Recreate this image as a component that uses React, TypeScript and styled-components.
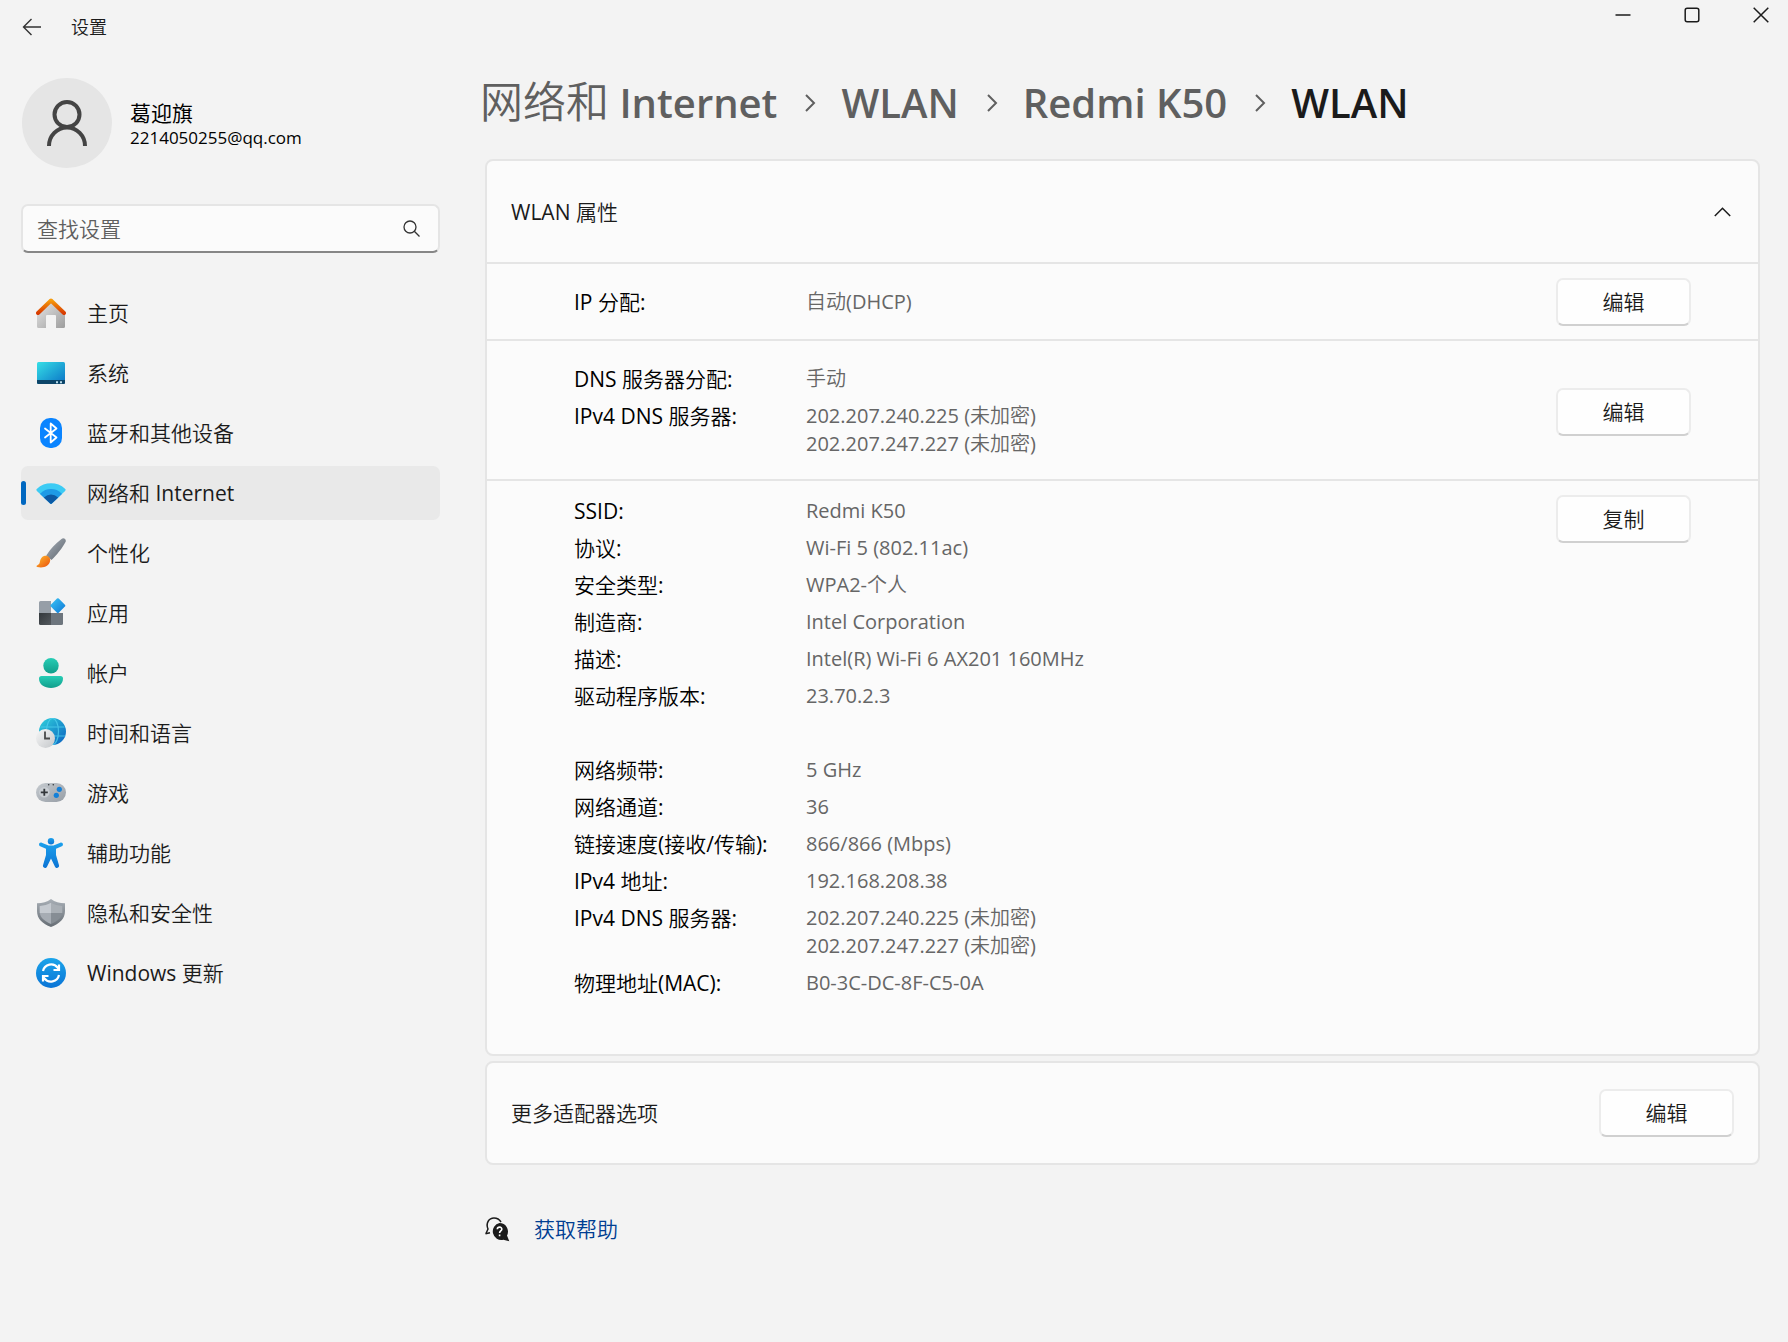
import React, { useState } from "react";
import styled, { createGlobalStyle, css } from "styled-components";

const GlobalStyle = createGlobalStyle`
  *, *::before, *::after { box-sizing: border-box; }
  body {
    margin: 0;
    background: #f3f3f3;
    color: #1b1b1b;
    font-family: "Open Sans", "Noto Sans CJK SC DemiLight", "Noto Sans CJK SC Light", "Noto Sans CJK SC", sans-serif;
    font-size: 21px;
    line-height: 28px;
  }
  button, input { font: inherit; color: inherit; }
`;

const Page = styled.div`
  display: flex;
  flex-direction: column;
  min-height: 100vh;
`;

const TitleBar = styled.header`
  display: flex;
  justify-content: space-between;
  align-items: flex-start;
  height: 56px;
  padding: 0 13px 0 18px;
`;

const TitleGroup = styled.div`
  display: flex;
  align-items: center;
  gap: 25px;
  height: 54px;
  font-size: 18px;
`;

const WindowControls = styled.div`
  display: flex;
  gap: 41px;
  padding-top: 1px;
`;

const IconButton = styled.button`
  display: flex;
  align-items: center;
  justify-content: center;
  width: 28px;
  height: 28px;
  padding: 0;
  border: 0;
  background: none;
`;

const Layout = styled.div`
  display: flex;
  flex: 1;
  gap: 45px;
  padding: 0 28px 0 21px;
`;

const Sidebar = styled.aside`
  flex: 0 0 419px;
  padding-top: 22px;
`;

const Profile = styled.div`
  display: flex;
  align-items: center;
  gap: 18px;
  margin-left: 1px;
`;

const Avatar = styled.div`
  display: flex;
  align-items: center;
  justify-content: center;
  width: 90px;
  height: 90px;
  border-radius: 50%;
  background: #e5e5e5;
`;

const ProfileText = styled.div`
  padding-top: 3px;
`;

const ProfileName = styled.div`
  color: #000;
  font-family: "Open Sans", "Noto Sans CJK SC", sans-serif;
  line-height: 26px;
`;

const ProfileMail = styled.div`
  color: #000;
  font-size: 17px;
  line-height: 24px;
`;

const SearchBox = styled.div`
  display: flex;
  align-items: center;
  height: 49px;
  margin: 36px 0 33px;
  padding: 0 18px 0 14px;
  border: 2px solid #e5e5e5;
  border-bottom-color: #868686;
  border-radius: 7px;
  background: #fbfbfb;
`;

const SearchInput = styled.input`
  flex: 1;
  min-width: 0;
  padding: 0;
  border: 0;
  outline: 0;
  background: none;
  &::placeholder { color: #5f5f5f; opacity: 1; }
`;

const NavList = styled.ul`
  display: flex;
  flex-direction: column;
  gap: 6px;
  margin: 0;
  padding: 0;
  list-style: none;
`;

const NavLink = styled.a<{ $active: boolean }>`
  position: relative;
  display: flex;
  align-items: center;
  gap: 21px;
  height: 54px;
  padding-left: 15px;
  border-radius: 7px;
  color: #1b1b1b;
  text-decoration: none;
  ${(p) =>
    p.$active &&
    css`
      background: #e9e9e9;
      &::before {
        content: "";
        position: absolute;
        left: 0;
        top: 15px;
        width: 5px;
        height: 24px;
        border-radius: 3px;
        background: #0067c0;
      }
    `}
`;

const Main = styled.main`
  flex: 1;
  min-width: 0;
  padding-top: 16px;
`;

const Crumbs = styled.ol`
  display: flex;
  align-items: center;
  margin: 0 0 26px -5px;
  padding: 0;
  list-style: none;
  font-size: 40px;
  font-weight: 600;
  line-height: 60px;
  white-space: nowrap;
`;

const Crumb = styled.li`
  display: flex;
  align-items: center;
`;

const CrumbLink = styled.a<{ $current?: boolean }>`
  color: ${(p) => (p.$current ? "#1b1b1b" : "#5f5f5f")};
  text-decoration: none;
`;

const CrumbHan = styled.span`
  font-size: 43px;
  font-weight: 400;
`;

const CrumbArrow = styled.svg`
  margin: 0 25px 0 27px;
`;

const Card = styled.section`
  margin-bottom: 5px;
  border: 2px solid #e5e5e5;
  border-radius: 8px;
  background: #fbfbfb;
`;

const CardHeader = styled.button`
  display: flex;
  align-items: center;
  justify-content: space-between;
  width: 100%;
  height: 101px;
  padding: 0 27px 0 24px;
  border: 0;
  background: none;
  text-align: left;
`;

const CardRow = styled.div`
  display: flex;
  align-items: center;
  justify-content: space-between;
  height: 100px;
  padding: 0 24px;
`;

const Section = styled.div<{ $top: number; $bottom: number; $align?: string }>`
  display: flex;
  align-items: ${(p) => p.$align ?? "center"};
  justify-content: space-between;
  border-top: 2px solid #e5e5e5;
  padding: ${(p) => `${p.$top}px 67px ${p.$bottom}px 87px`};
`;

const Details = styled.dl`
  display: grid;
  grid-template-columns: 232px 1fr;
  row-gap: 9px;
  margin: 0;
  padding: 2px 0;
`;

const Term = styled.dt`
  color: #000;
  white-space: nowrap;
`;

const Value = styled.dd`
  margin: 0;
  color: #666;
  font-size: 20px;
  white-space: pre-line;
`;

const Spacer = styled.div`
  grid-column: 1 / -1;
  height: 28px;
`;

const ActionButton = styled.button`
  width: 135px;
  height: 48px;
  padding: 0;
  border: 2px solid #ececec;
  border-bottom-color: #d0d0d0;
  border-radius: 7px;
  background: #fefefe;
`;

const Help = styled.div`
  display: flex;
  align-items: center;
  gap: 24px;
  padding: 45px 0 40px;
`;

const HelpLink = styled.a`
  color: #003e92;
  text-decoration: none;
`;

const NavSvg = styled.svg.attrs({ viewBox: "0 0 30 30", width: 30, height: 30, "aria-hidden": true })`
  flex: none;
  display: block;
`;

type Stops = [string, string];
const Gradient = ({ id, stops, vertical }: { id: string; stops: Stops; vertical?: boolean }) => (
  <linearGradient id={id} x1="0" y1="0" x2={vertical ? "0" : "1"} y2="1">
    <stop offset="0" stopColor={stops[0]} />
    <stop offset="1" stopColor={stops[1]} />
  </linearGradient>
);

const HomeIcon = () => (
  <NavSvg>
    <defs>
      <Gradient id="homeWall" stops={["#e6e6e6", "#9d9d9d"]} />
      <Gradient id="homeRoof" stops={["#f59a0b", "#d83b01"]} vertical />
    </defs>
    <path d="M15 4 29 16v12.500a1.500 1.500 0 0 1-1.500 1.500H20V18a1 1 0 0 0-1-1h-8a1 1 0 0 0-1 1v12H2.500A1.500 1.500 0 0 1 1 28.500V16z" fill="url(#homeWall)" />
    <path d="M2 15 15 2.500 28 15" fill="none" stroke="url(#homeRoof)" strokeWidth="4" strokeLinecap="round" strokeLinejoin="round" />
  </NavSvg>
);

const SystemIcon = () => (
  <NavSvg>
    <defs><Gradient id="screen" stops={["#35dfe6", "#0a72c6"]} /></defs>
    <rect x="1" y="4" width="28" height="22" rx="1.500" fill="url(#screen)" />
    <path d="M1 22h28v2.500a1.500 1.500 0 0 1-1.500 1.500h-25A1.500 1.500 0 0 1 1 24.500z" fill="#0c4569" />
    <path d="M20 23.200h2v2h-2zM24 23.200h2v2h-2z" fill="#b9dcec" />
  </NavSvg>
);

const BluetoothIcon = () => (
  <NavSvg>
    <rect x="4" y="0" width="22" height="30" rx="10" fill="#0a84ff" />
    <path d="M9 10.500 20.500 19.500 14.700 24.500V5.500L20.500 10.500 9 19.500" fill="none" stroke="#fff" strokeWidth="1.800" strokeLinecap="round" strokeLinejoin="round" />
  </NavSvg>
);

const WifiIcon = () => (
  <NavSvg>
    <defs>
      <clipPath id="fan">
        <path d="M13.900 25.300.9 12.900a1.500 1.500 0 0 1 .1-2.200C8.500 3.500 21.500 3.500 29 10.700a1.500 1.500 0 0 1 .1 2.200l-13 12.400a1.600 1.600 0 0 1-2.200 0z" />
      </clipPath>
    </defs>
    <g clipPath="url(#fan)">
      <rect width="30" height="30" fill="#3ccbf4" />
      <circle cx="15" cy="26" r="15" fill="#1e9ae6" />
      <circle cx="15" cy="26" r="9.500" fill="#0c59a4" />
    </g>
  </NavSvg>
);

const BrushIcon = () => (
  <NavSvg>
    <defs>
      <Gradient id="handle" stops={["#a9b1ba", "#5b636c"]} />
      <Gradient id="bristle" stops={["#ffbd2e", "#ea4f0c"]} />
    </defs>
    <path d="M25.500.9c2.200-1.700 5.300.4 4 3.200C26.800 9.500 21 17 15.500 22l-5.300-4.400C14 11.500 20 5 25.500.9z" fill="url(#handle)" />
    <path d="M8.800 17.800c3.200-.6 6 2 5.300 5.200-.9 4.800-6.300 7.600-12.900 6-.9-.3-.9-1.300-.1-1.600 3.200-1.200 2.300-2.900 3.400-5.800.8-2.100 2.200-3.400 4.300-3.800z" fill="url(#bristle)" />
  </NavSvg>
);

const AppsIcon = () => (
  <NavSvg>
    <defs>
      <Gradient id="appDark" stops={["#33383c", "#54595e"]} />
      <Gradient id="appDiamond" stops={["#3ac4f5", "#0f78d6"]} />
    </defs>
    <path d="M4.500 3H15v12H3V4.500A1.500 1.500 0 0 1 4.500 3z" fill="#969ea7" />
    <path d="M3 15h12v12H4.500A1.500 1.500 0 0 1 3 25.500z" fill="url(#appDark)" />
    <path d="M15 15h12v10.500a1.500 1.500 0 0 1-1.500 1.500H15z" fill="#6d757d" />
    <path d="m21 .6-6.200 6.200a1.200 1.200 0 0 0 0 1.700l6.200 6.200a1.200 1.200 0 0 0 1.700 0l6.200-6.200a1.200 1.200 0 0 0 0-1.700L22.700.6a1.200 1.200 0 0 0-1.700 0z" fill="url(#appDiamond)" />
  </NavSvg>
);

const AccountIcon = () => (
  <NavSvg>
    <defs><Gradient id="person" stops={["#27cdb5", "#109e8b"]} vertical /></defs>
    <circle cx="15" cy="7.700" r="7.700" fill="url(#person)" />
    <path d="M5.500 18h19a2.500 2.500 0 0 1 2.500 2.500C27 26.500 21.500 30 15 30S3 26.500 3 20.500A2.500 2.500 0 0 1 5.500 18z" fill="url(#person)" />
  </NavSvg>
);

const TimeIcon = () => (
  <NavSvg>
    <defs>
      <Gradient id="globe" stops={["#2fd3dc", "#0b5fc0"]} />
      <Gradient id="clockFace" stops={["#f7f7f7", "#c4c7ca"]} />
    </defs>
    <circle cx="16.500" cy="13.500" r="13.500" fill="url(#globe)" />
    <g fill="none" stroke="#4fd0ee" strokeWidth="1.200" opacity=".8">
      <ellipse cx="16.500" cy="13.500" rx="6" ry="13" />
      <path d="M4.500 9h24M3.500 18h26" />
    </g>
    <circle cx="9.500" cy="20.500" r="9.500" fill="url(#clockFace)" />
    <path d="M9 13.500V20.500h5" fill="none" stroke="#4a4a4a" strokeWidth="1.800" />
  </NavSvg>
);

const GameIcon = () => (
  <NavSvg>
    <defs><Gradient id="pad" stops={["#c6cbd0", "#969da5"]} /></defs>
    <rect x="0" y="5" width="30" height="19" rx="9.500" fill="url(#pad)" />
    <circle cx="8.300" cy="14.300" r="5.300" fill="#c9ced3" />
    <path d="M8.300 10.800v7M4.800 14.300h7" stroke="#33373b" strokeWidth="1.800" />
    <circle cx="23.300" cy="11.300" r="2.600" fill="#1480d8" />
    <circle cx="20.300" cy="17.300" r="2.600" fill="#1480d8" />
    <circle cx="12.700" cy="6.700" r=".8" fill="#33373b" />
    <circle cx="17.300" cy="6.700" r=".8" fill="#33373b" />
  </NavSvg>
);

const AccessIcon = () => (
  <NavSvg>
    <defs><Gradient id="figure" stops={["#1ba0ec", "#0c74d4"]} vertical /></defs>
    <g fill="url(#figure)">
      <circle cx="15" cy="3.200" r="3.200" />
      <path d="M5.700 4.700 12.500 7.400h5l6.800-2.700c2.500-.8 3.700 2.500 1.500 3.500L20 10.800V17l3 10.200c.6 2.700-2.900 3.800-4 1.500L15 20.500l-4 8.200c-1.100 2.300-4.600 1.200-4-1.500L10 17v-6.200L4.200 8.200C2 7.200 3.200 3.900 5.700 4.700z" />
    </g>
  </NavSvg>
);

const ShieldIcon = () => (
  <NavSvg>
    <defs><Gradient id="shieldEdge" stops={["#a8afb6", "#666d74"]} vertical /></defs>
    <path d="M15 1c4 3.200 8.500 4.300 14 4.300V13c0 8-5.500 12.500-14 16C6.500 25.500 1 21 1 13V5.300C6.500 5.300 11 4.200 15 1z" fill="url(#shieldEdge)" />
    <path d="M15 4.800V15H3.700V8C8 7.700 11.500 6.800 15 4.800z" fill="#c5cad0" />
    <path d="M15 4.800V15h11.300V8C22 7.700 18.500 6.800 15 4.800z" fill="#a9afb5" />
    <path d="M3.800 15H15v11C8.500 23.200 4.600 20 3.800 15z" fill="#a6acb3" />
    <path d="M26.200 15H15v11c6.500-2.800 10.400-6 11.200-11z" fill="#868d94" />
  </NavSvg>
);

const UpdateIcon = () => (
  <NavSvg>
    <defs><Gradient id="update" stops={["#1ba4ea", "#0a74d6"]} vertical /></defs>
    <circle cx="15" cy="15" r="15" fill="url(#update)" />
    <g fill="none" stroke="#fff" strokeWidth="2.200">
      <path d="M7 13a8.300 8.300 0 0 1 14.800-3.200L23 11.500M23 6.500v5.500h-5.500" />
      <path d="M23 17a8.300 8.300 0 0 1-14.800 3.200L7 18.500M7 23.500V18h5.500" />
    </g>
  </NavSvg>
);

const NAV = [
  { label: "主页", Icon: HomeIcon },
  { label: "系统", Icon: SystemIcon },
  { label: "蓝牙和其他设备", Icon: BluetoothIcon },
  { label: "网络和 Internet", Icon: WifiIcon, active: true },
  { label: "个性化", Icon: BrushIcon },
  { label: "应用", Icon: AppsIcon },
  { label: "帐户", Icon: AccountIcon },
  { label: "时间和语言", Icon: TimeIcon },
  { label: "游戏", Icon: GameIcon },
  { label: "辅助功能", Icon: AccessIcon },
  { label: "隐私和安全性", Icon: ShieldIcon },
  { label: "Windows 更新", Icon: UpdateIcon },
];

const DNS_SERVERS = "202.207.240.225 (未加密)\n202.207.247.227 (未加密)";

type Row = [string, string] | null;

const IP_ROWS: Row[] = [["IP 分配:", "自动(DHCP)"]];
const DNS_ROWS: Row[] = [
  ["DNS 服务器分配:", "手动"],
  ["IPv4 DNS 服务器:", DNS_SERVERS],
];
const INFO_ROWS: Row[] = [
  ["SSID:", "Redmi K50"],
  ["协议:", "Wi-Fi 5 (802.11ac)"],
  ["安全类型:", "WPA2-个人"],
  ["制造商:", "Intel Corporation"],
  ["描述:", "Intel(R) Wi-Fi 6 AX201 160MHz"],
  ["驱动程序版本:", "23.70.2.3"],
  null,
  ["网络频带:", "5 GHz"],
  ["网络通道:", "36"],
  ["链接速度(接收/传输):", "866/866 (Mbps)"],
  ["IPv4 地址:", "192.168.208.38"],
  ["IPv4 DNS 服务器:", DNS_SERVERS],
  ["物理地址(MAC):", "B0-3C-DC-8F-C5-0A"],
];

const DetailList = ({ rows }: { rows: Row[] }) => (
  <Details>
    {rows.map((row, i) =>
      row ? (
        <React.Fragment key={i}>
          <Term>{row[0]}</Term>
          <Value>{row[1]}</Value>
        </React.Fragment>
      ) : (
        <Spacer key={i} as="dt" aria-hidden />
      )
    )}
  </Details>
);

const Arrow = () => (
  <CrumbArrow width="12" height="18" viewBox="0 0 12 18" aria-hidden>
    <path d="m2 1 8 8-8 8" fill="none" stroke="#5f5f5f" strokeWidth="2" />
  </CrumbArrow>
);

export default function App() {
  const [open, setOpen] = useState(true);
  return (
    <Page>
      <GlobalStyle />
      <TitleBar>
        <TitleGroup>
          <IconButton aria-label="返回">
            <svg width="20" height="18" viewBox="0 0 20 18" fill="none" stroke="#333" strokeWidth="1.400">
              <path d="M19 9H1.500M9.500 1 1.500 9l8 8" />
            </svg>
          </IconButton>
          <span>设置</span>
        </TitleGroup>
        <WindowControls>
          <IconButton aria-label="最小化">
            <svg width="16" height="16" viewBox="0 0 16 16" stroke="#1b1b1b" strokeWidth="1.500"><path d="M.5 8h15" /></svg>
          </IconButton>
          <IconButton aria-label="最大化">
            <svg width="16" height="16" viewBox="0 0 16 16" fill="none" stroke="#1b1b1b" strokeWidth="1.500"><rect x="1.200" y="1.200" width="13.600" height="13.600" rx="2" /></svg>
          </IconButton>
          <IconButton aria-label="关闭">
            <svg width="16" height="16" viewBox="0 0 16 16" stroke="#1b1b1b" strokeWidth="1.500"><path d="m.7.7 14.600 14.600M15.300.7.7 15.300" /></svg>
          </IconButton>
        </WindowControls>
      </TitleBar>
      <Layout>
        <Sidebar>
          <Profile>
            <Avatar>
              <svg width="42" height="46" viewBox="0 0 42 46" fill="none" stroke="#444" strokeWidth="4" aria-hidden>
                <circle cx="21" cy="14.500" r="12.500" />
                <path d="M3 46a18 18.500 0 0 1 36 0" />
              </svg>
            </Avatar>
            <ProfileText>
              <ProfileName>葛迎旗</ProfileName>
              <ProfileMail>2214050255@qq.com</ProfileMail>
            </ProfileText>
          </Profile>
          <SearchBox>
            <SearchInput type="text" placeholder="查找设置" aria-label="查找设置" />
            <svg width="17" height="17" viewBox="0 0 17 17" fill="none" stroke="#333" strokeWidth="1.300" aria-hidden>
              <circle cx="7" cy="7" r="6" />
              <path d="m11.300 11.300 5.200 5.200" />
            </svg>
          </SearchBox>
          <nav>
            <NavList>
              {NAV.map(({ label, Icon, active }) => (
                <li key={label}>
                  <NavLink href="#" $active={!!active} aria-current={active ? "page" : undefined}>
                    <Icon />
                    <span>{label}</span>
                  </NavLink>
                </li>
              ))}
            </NavList>
          </nav>
        </Sidebar>
        <Main>
          <Crumbs>
            <Crumb>
              <CrumbLink href="#"><CrumbHan>网络和</CrumbHan> Internet</CrumbLink>
              <Arrow />
            </Crumb>
            <Crumb>
              <CrumbLink href="#">WLAN</CrumbLink>
              <Arrow />
            </Crumb>
            <Crumb>
              <CrumbLink href="#">Redmi K50</CrumbLink>
              <Arrow />
            </Crumb>
            <Crumb>
              <CrumbLink as="span" $current aria-current="page">WLAN</CrumbLink>
            </Crumb>
          </Crumbs>
          <Card>
            <CardHeader aria-expanded={open} onClick={() => setOpen(!open)}>
              <span>WLAN 属性</span>
              <svg width="17" height="10" viewBox="0 0 17 10" fill="none" stroke="#1b1b1b" strokeWidth="1.500" aria-hidden>
                <path d={open ? "m.8 9 7.700-7.700L16.200 9" : "m.8 1 7.700 7.700L16.200 1"} />
              </svg>
            </CardHeader>
            {open && (
              <>
                <Section $top={14} $bottom={13}>
                  <DetailList rows={IP_ROWS} />
                  <ActionButton>编辑</ActionButton>
                </Section>
                <Section $top={22} $bottom={19}>
                  <DetailList rows={DNS_ROWS} />
                  <ActionButton>编辑</ActionButton>
                </Section>
                <Section $top={14} $bottom={55} $align="flex-start">
                  <DetailList rows={INFO_ROWS} />
                  <ActionButton>复制</ActionButton>
                </Section>
              </>
            )}
          </Card>
          <Card>
            <CardRow>
              <span>更多适配器选项</span>
              <ActionButton>编辑</ActionButton>
            </CardRow>
          </Card>
          <Help>
            <svg width="25" height="25" viewBox="0 0 25 25" aria-hidden>
              <path d="M1 16.500 3 12C.5 6 4 1 9 1c3.500 0 5.500 1.500 7 4" fill="none" stroke="#1b1b1b" strokeWidth="1.500" />
              <path d="m.5 16.800 4.500-1" fill="none" stroke="#1b1b1b" strokeWidth="1.500" />
              <path d="M14.500 6a8.500 8.500 0 0 1 7.500 12.500l2.300 5.800-6-1.500A8.500 8.500 0 1 1 14.500 6z" fill="#1b1b1b" />
              <path d="M12.300 12.300c.2-3 4.800-2.700 4.500 0-.2 1.700-2.200 1.700-2.200 3.700M14.600 17.500v1.800" fill="none" stroke="#fff" strokeWidth="1.600" />
            </svg>
            <HelpLink href="#">获取帮助</HelpLink>
          </Help>
        </Main>
      </Layout>
    </Page>
  );
}
